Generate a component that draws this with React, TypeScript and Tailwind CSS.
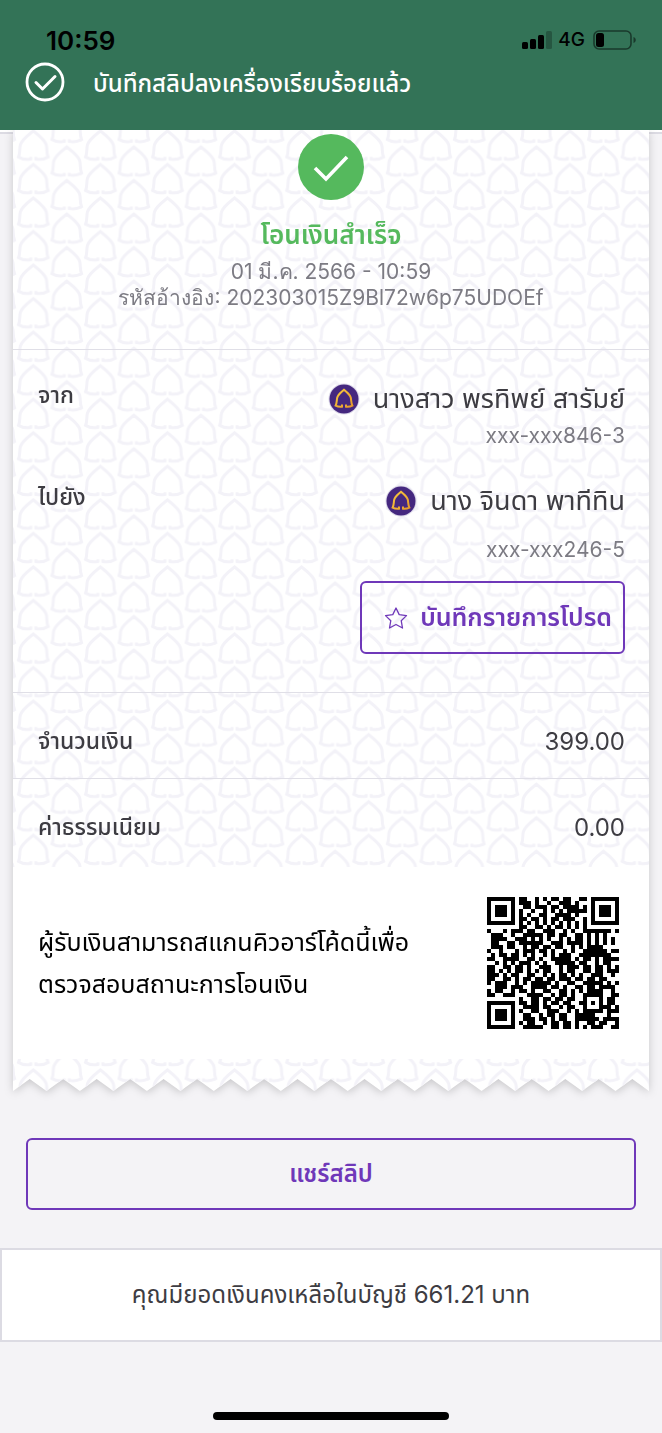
const LEAF =
  'M-2.5 28 L-2.5 30 C-7 31 -11.500 30 -14.800 28 C-13 24 -14 20 -13 16 C-11.500 10.500 -5 6 0 2 C5 6 11.500 10.500 13 16 C14 20 13 24 14.800 28 C11.500 30 7 31 2.500 30 L2.500 28';

const TILE = 67.08;
const ROW = 33.54;

const QR_ROWS = [
  '#######.##..#.#.##.##..##.#######',
  '#.....#.###.#..#..###.#...#.....#',
  '#.###.#..##.###.##.####.#.#.###.#',
  '#.###.#.#..#..#.#.#.#####.#.###.#',
  '#.###.#.#.#..##..####.#...#.###.#',
  '#.....#.##.##.#.##.###..#.#.....#',
  '#######.#.#.#.#.#.#.#.#.#.#######',
  '........##..##.#.##.#.#.#........',
  '#...#.###.##..###..#.#..#######.#',
  '.###..#..#####.##.##..##.#.#.#...',
  '.####..###.#.#.#..#.#.##.#.#.#.#.',
  '.##..##.######..###.####.#.#.#.#.',
  '.###.##..#.##.##.##..#.#.####....',
  '#..#...#.###.##.#..#.#..######.##',
  '.#.##.##.#.#..#.#.###..########..',
  '##..####..##.#..#####.#.##.#.####',
  '..#.#.#.###.#.#..#####.##..#.##..',
  '##..##.##.#..###..#.###.##.##.#.#',
  '##.#.#.##.#.#.##..#.##..##.##.###',
  '###.#.##..##..#.#.##.#.#..###..#.',
  '##..##.#.##.##.##.###.##.##.##...',
  '#.###..#.#.#####.#..##..#####.#.#',
  '..###.###..####.##.#..##.##.####.',
  '#.##..#.##.#..##..##.#.#.####..#.',
  '##..###...####..#.##.#..#####..##',
  '........#..##.##.##.##..#...#.##.',
  '#######.##.##.#.##.##..##.#.#.##.',
  '#.....#..####.##..#.##..#...###.#',
  '#.###.#.#..##..###..#.#.#####.###',
  '#.###.#..##..#.##.##..#####...#..',
  '#.###.#..###.##.#.##..######.####',
  '#.....#.#.##..#.##.##.#..##.##..#',
  '#######..#####..##.##.#.#.###..##',
];

const QR_PATH = QR_ROWS.map((row, y) =>
  row
    .split('')
    .map((cell, x) => (cell === '#' ? `M${x} ${y}h1v1h-1z` : ''))
    .join('')
).join('');

const TEETH = Array.from({ length: 19 }, (_, i) => {
  const x = 636 - i * (636 / 19);
  return `L${x.toFixed(1)} 32 L${(x - 636 / 38).toFixed(1)} 20`;
}).join(' ');

function LeafPattern({ id, offset = 0 }: { id: string; offset?: number }) {
  return (
    <pattern id={id} width={TILE} height={ROW} patternUnits="userSpaceOnUse" patternTransform={`translate(0 ${offset})`}>
      <g fill="none" stroke="#f3f2f8" strokeWidth="3">
        {[-ROW, 0, ROW].map((dy) => (
          <g key={dy}>
            <path d={LEAF} transform={`translate(20.3 ${dy - 1})`} />
            <path d={LEAF} transform={`translate(53.8 ${dy + 15})`} />
            <path d={LEAF} transform={`translate(-13.3 ${dy + 15})`} />
          </g>
        ))}
      </g>
    </pattern>
  );
}

function BankLogo() {
  return (
    <svg viewBox="0 0 32 32" className="h-8 w-8 shrink-0" aria-hidden="true">
      <defs>
        <linearGradient id="gold" x1="0" y1="0" x2="1" y2="1">
          <stop offset="0" stopColor="#f8c93f" />
          <stop offset="1" stopColor="#e79a2c" />
        </linearGradient>
      </defs>
      <circle cx="16" cy="16" r="15.5" fill="#dcd8e8" />
      <circle cx="16" cy="16" r="14.5" fill="#45287f" />
      <path
        d="M14 21.500 L14 23.700 C11.500 24 9.500 23.600 7.600 22.600 C9 20 8.600 17.500 9.200 14.800 C10 11.500 13.200 9.500 16 6.800 C18.800 9.500 22 11.500 22.800 14.800 C23.400 17.500 23 20 24.400 22.600 C22.500 23.600 20.500 24 18 23.700 L18 21.500"
        fill="none"
        stroke="url(#gold)"
        strokeWidth="2"
      />
    </svg>
  );
}

function StatusBar() {
  return (
    <div className="flex h-8 items-center justify-between pr-[26px] pl-[46px] text-black">
      <span className="text-[26px] font-semibold">10:59</span>
      <div className="flex items-center">
        <svg viewBox="0 0 30 20" className="h-5 w-[30px]" aria-hidden="true">
          <rect x="0" y="12" width="6" height="7" rx="1.5" />
          <rect x="8" y="9" width="6" height="10" rx="1.5" />
          <rect x="16" y="5" width="6" height="14" rx="1.5" />
          <rect x="24" y="1" width="6" height="18" rx="1.5" opacity="0.25" />
        </svg>
        <span className="ml-[6px] text-[19px] font-medium">4G</span>
        <svg viewBox="0 0 43 20" className="ml-2 h-5 w-[43px]" aria-hidden="true">
          <rect x="1" y="1" width="37" height="18" rx="5" fill="none" stroke="#000" strokeOpacity="0.5" strokeWidth="1.6" />
          <rect x="3" y="3" width="8" height="14" rx="2.5" />
          <path d="M40.5 7 C43.5 8 43.5 12 40.5 13Z" opacity="0.5" />
        </svg>
      </div>
    </div>
  );
}

function AmountRow({ label, value }: { label: string; value: string }) {
  return (
    <div className="flex h-[86px] items-center justify-between border-t border-[#e0dfe7] pt-3 pr-6 pl-[25px]">
      <dt className="text-[23px] font-medium text-[#3d3c42]">{label}</dt>
      <dd className="text-2xl text-[#3d3c42]">{value}</dd>
    </div>
  );
}

function Party({ label, name, account, roomy }: { label: string; name: string; account: string; roomy?: boolean }) {
  return (
    <div className="flex items-start justify-between">
      <dt className="text-[23px] leading-10 font-medium text-[#3d3c42]">{label}</dt>
      <dd className="flex flex-col items-end">
        <div className="flex h-12 items-center gap-[13px]">
          <BankLogo />
          <span className="text-[27px] text-[#3d3c42]">{name}</span>
        </div>
        <span className={roomy ? 'pt-3 text-[21px] leading-[26px] text-[#7c7b83]' : 'text-[21px] leading-[26px] text-[#7c7b83]'}>
          {account}
        </span>
      </dd>
    </div>
  );
}

function App() {
  return (
    <div className="min-h-screen bg-[#f4f3f6] font-[Inter,'Noto_Sans_Thai',sans-serif]">
      <header className="relative z-10 h-[130px] bg-[#337357] pt-6">
        <StatusBar />
        <div className="flex h-[52px] items-center gap-7 pl-[25px] text-white" role="status">
          <svg viewBox="0 0 40 40" className="h-10 w-10" fill="none" stroke="currentColor" aria-hidden="true">
            <circle cx="20" cy="20" r="18" strokeWidth="2.8" />
            <path d="M11 20.500 L17.500 27 L30 14.500" strokeWidth="3" strokeLinecap="round" strokeLinejoin="round" />
          </svg>
          <p className="pt-1 text-2xl font-medium">บันทึกสลิปลงเครื่องเรียบร้อยแล้ว</p>
        </div>
      </header>

      <main>
        <div className="relative h-1 border-b-2 border-[#dcdbe3] bg-white" />
        <article className="relative -mt-1 px-[13px] drop-shadow-[0_2px_4px_rgba(0,0,0,0.18)]">
          <div className="relative bg-white">
            <svg className="absolute inset-0 h-full w-full" aria-hidden="true">
              <defs>
                <LeafPattern id="leaf" />
              </defs>
              <rect width="100%" height="100%" fill="url(#leaf)" />
            </svg>
            <div className="relative">
              <div className="flex h-[219px] flex-col items-center pt-1 text-center">
                <svg viewBox="0 0 66 66" className="h-[66px] w-[66px]" aria-hidden="true">
                  <circle cx="33" cy="33" r="33" fill="#55b95d" />
                  <path d="M17 34 L28 45 L49 23" fill="none" stroke="#fff" strokeWidth="3.6" />
                </svg>
                <h1 className="mt-3 text-[26px] leading-[46px] font-semibold text-[#55b95d]">โอนเงินสำเร็จ</h1>
                <p className="pt-px font-[Inter,sans-serif] text-[21px] leading-[26px] text-[#7c7b83]">01 มี.ค. 2566 - 10:59</p>
                <p className="font-[Inter,sans-serif] text-[21px] leading-[26px] text-[#7c7b83]">
                  รหัสอ้างอิง: 202303015Z9Bl72w6p75UDOEf
                </p>
              </div>

              <dl className="pb-[3px]">
                <div className="flex h-[343px] flex-col border-t border-[#e0dfe7] pt-[25px] pr-6 pl-[25px]">
                  <Party label="จาก" name="นางสาว พรทิพย์ สารัมย์" account="xxx-xxx846-3" />
                  <div className="mt-7">
                    <Party label="ไปยัง" name="นาง จินดา พาทีทิน" account="xxx-xxx246-5" roomy />
                  </div>
                  <button
                    type="button"
                    className="mt-[18px] flex h-[73px] items-center gap-3 self-end rounded-md border-2 border-[#6f38b9] pr-[11px] pl-[22px] text-[#6f38b9]"
                  >
                    <svg viewBox="0 0 24 24" className="h-6 w-6" fill="none" stroke="currentColor" strokeWidth="1.3" strokeLinejoin="round" aria-hidden="true">
                      <path d="M12 2 L15.200 8.600 L22.500 9.600 L17.200 14.700 L18.500 22 L12 18.500 L5.500 22 L6.800 14.700 L1.500 9.600 L8.800 8.600 Z" />
                    </svg>
                    <span className="text-[25px] font-semibold">บันทึกรายการโปรด</span>
                  </button>
                </div>
                <AmountRow label="จำนวนเงิน" value="399.00" />
                <AmountRow label="ค่าธรรมเนียม" value="0.00" />
              </dl>
            </div>
          </div>

          <div className="flex h-48 items-center justify-between bg-white pr-[30px] pl-[25px]">
            <p className="text-[25px] leading-[42px] text-black">
              ผู้รับเงินสามารถสแกนคิวอาร์โค้ดนี้เพื่อ
              <br />
              ตรวจสอบสถานะการโอนเงิน
            </p>
            <svg viewBox="0 0 33 33" className="h-[132px] w-[132px] shrink-0" shapeRendering="crispEdges" role="img" aria-label="QR code">
              <path d={QR_PATH} />
            </svg>
          </div>

          <svg viewBox="0 0 636 32" preserveAspectRatio="none" className="block h-8 w-full" aria-hidden="true">
            <defs>
              <LeafPattern id="leaf-edge" offset={10} />
            </defs>
            <path d={`M0 0 H636 ${TEETH} L0 32Z`} fill="#fff" />
            <path d={`M0 0 H636 ${TEETH} L0 32Z`} fill="url(#leaf-edge)" />
          </svg>
        </article>

        <div className="px-[26px] pt-[47px]">
          <button type="button" className="h-[72px] w-full rounded-md border-2 border-[#6f38b9] text-2xl font-semibold text-[#6f38b9]">
            แชร์สลิป
          </button>
        </div>

        <p className="mt-[38px] flex h-[94px] items-center justify-center border-2 border-[#dcdbe3] bg-white text-2xl text-[#3d3c42]">
          คุณมียอดเงินคงเหลือในบัญชี 661.21 บาท
        </p>
      </main>

      <div className="flex justify-center pt-[70px] pb-3">
        <div className="h-2 w-[236px] rounded-full bg-black" />
      </div>
    </div>
  );
}

export default App;
